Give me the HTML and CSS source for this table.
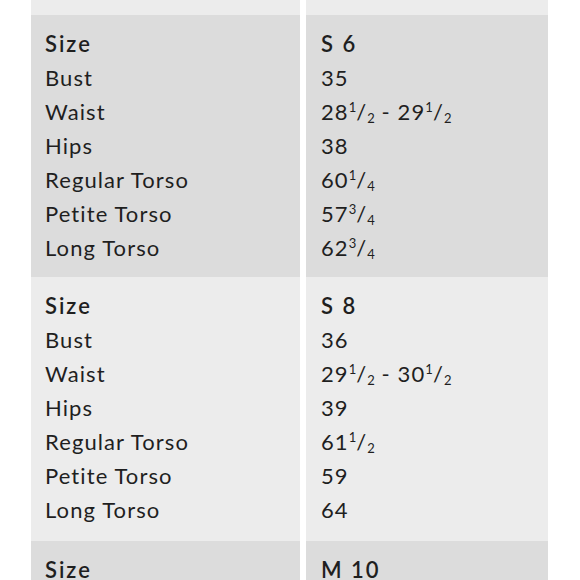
FILE: index.html
```html
<!DOCTYPE html>
<html>
<head>
<meta charset="utf-8">
<link rel="stylesheet" href="styles.css">
</head>
<body>
<div class="table">
  <div class="band light top"><div class="cell"></div><div class="cell"></div></div>

  <div class="band dark">
    <div class="cell">
      <div class="row head">Size</div>
      <div class="row">Bust</div>
      <div class="row">Waist</div>
      <div class="row">Hips</div>
      <div class="row">Regular Torso</div>
      <div class="row">Petite Torso</div>
      <div class="row">Long Torso</div>
    </div>
    <div class="cell">
      <div class="row head">S 6</div>
      <div class="row">35</div>
      <div class="row">28<sup>1</sup>/<sub>2</sub> - 29<sup>1</sup>/<sub>2</sub></div>
      <div class="row">38</div>
      <div class="row">60<sup>1</sup>/<sub>4</sub></div>
      <div class="row">57<sup>3</sup>/<sub>4</sub></div>
      <div class="row">62<sup>3</sup>/<sub>4</sub></div>
    </div>
  </div>

  <div class="band light">
    <div class="cell">
      <div class="row head">Size</div>
      <div class="row">Bust</div>
      <div class="row">Waist</div>
      <div class="row">Hips</div>
      <div class="row">Regular Torso</div>
      <div class="row">Petite Torso</div>
      <div class="row">Long Torso</div>
    </div>
    <div class="cell">
      <div class="row head">S 8</div>
      <div class="row">36</div>
      <div class="row">29<sup>1</sup>/<sub>2</sub> - 30<sup>1</sup>/<sub>2</sub></div>
      <div class="row">39</div>
      <div class="row">61<sup>1</sup>/<sub>2</sub></div>
      <div class="row">59</div>
      <div class="row">64</div>
    </div>
  </div>

  <div class="band dark">
    <div class="cell">
      <div class="row head">Size</div>
    </div>
    <div class="cell">
      <div class="row head">M 10</div>
    </div>
  </div>
</div>
</body>
</html>
```

FILE: styles.css
```css
html, body {
  margin: 0;
  padding: 0;
  background: #ffffff;
  height: 580px;
  overflow: hidden;
}

body {
  font-family: Lato, "Open Sans", sans-serif;
  color: #1f1f1f;
}

.table {
  padding-left: 31px;
}

.band {
  display: grid;
  grid-template-columns: 269px 242px;
  column-gap: 6px;
}

.cell {
  padding: 12px 14px 12px 14px;
}

.band.light .cell {
  padding-bottom: 14px;
}

.band.dark .cell {
  background: #dcdcdc;
}

.band.light .cell {
  background: #ececec;
}

.band .cell + .cell {
  padding-left: 15px;
}

.band.top .cell {
  height: 15px;
  padding: 0;
}

.row {
  font-size: 22px;
  line-height: 34px;
  letter-spacing: 1.1px;
  white-space: nowrap;
}

.row.head {
  font-weight: 600;
  letter-spacing: 2px;
}

sup, sub {
  font-size: 13px;
  line-height: 0;
  letter-spacing: 0;
}

sup {
  vertical-align: 8px;
}

sub {
  vertical-align: -3px;
}
```
